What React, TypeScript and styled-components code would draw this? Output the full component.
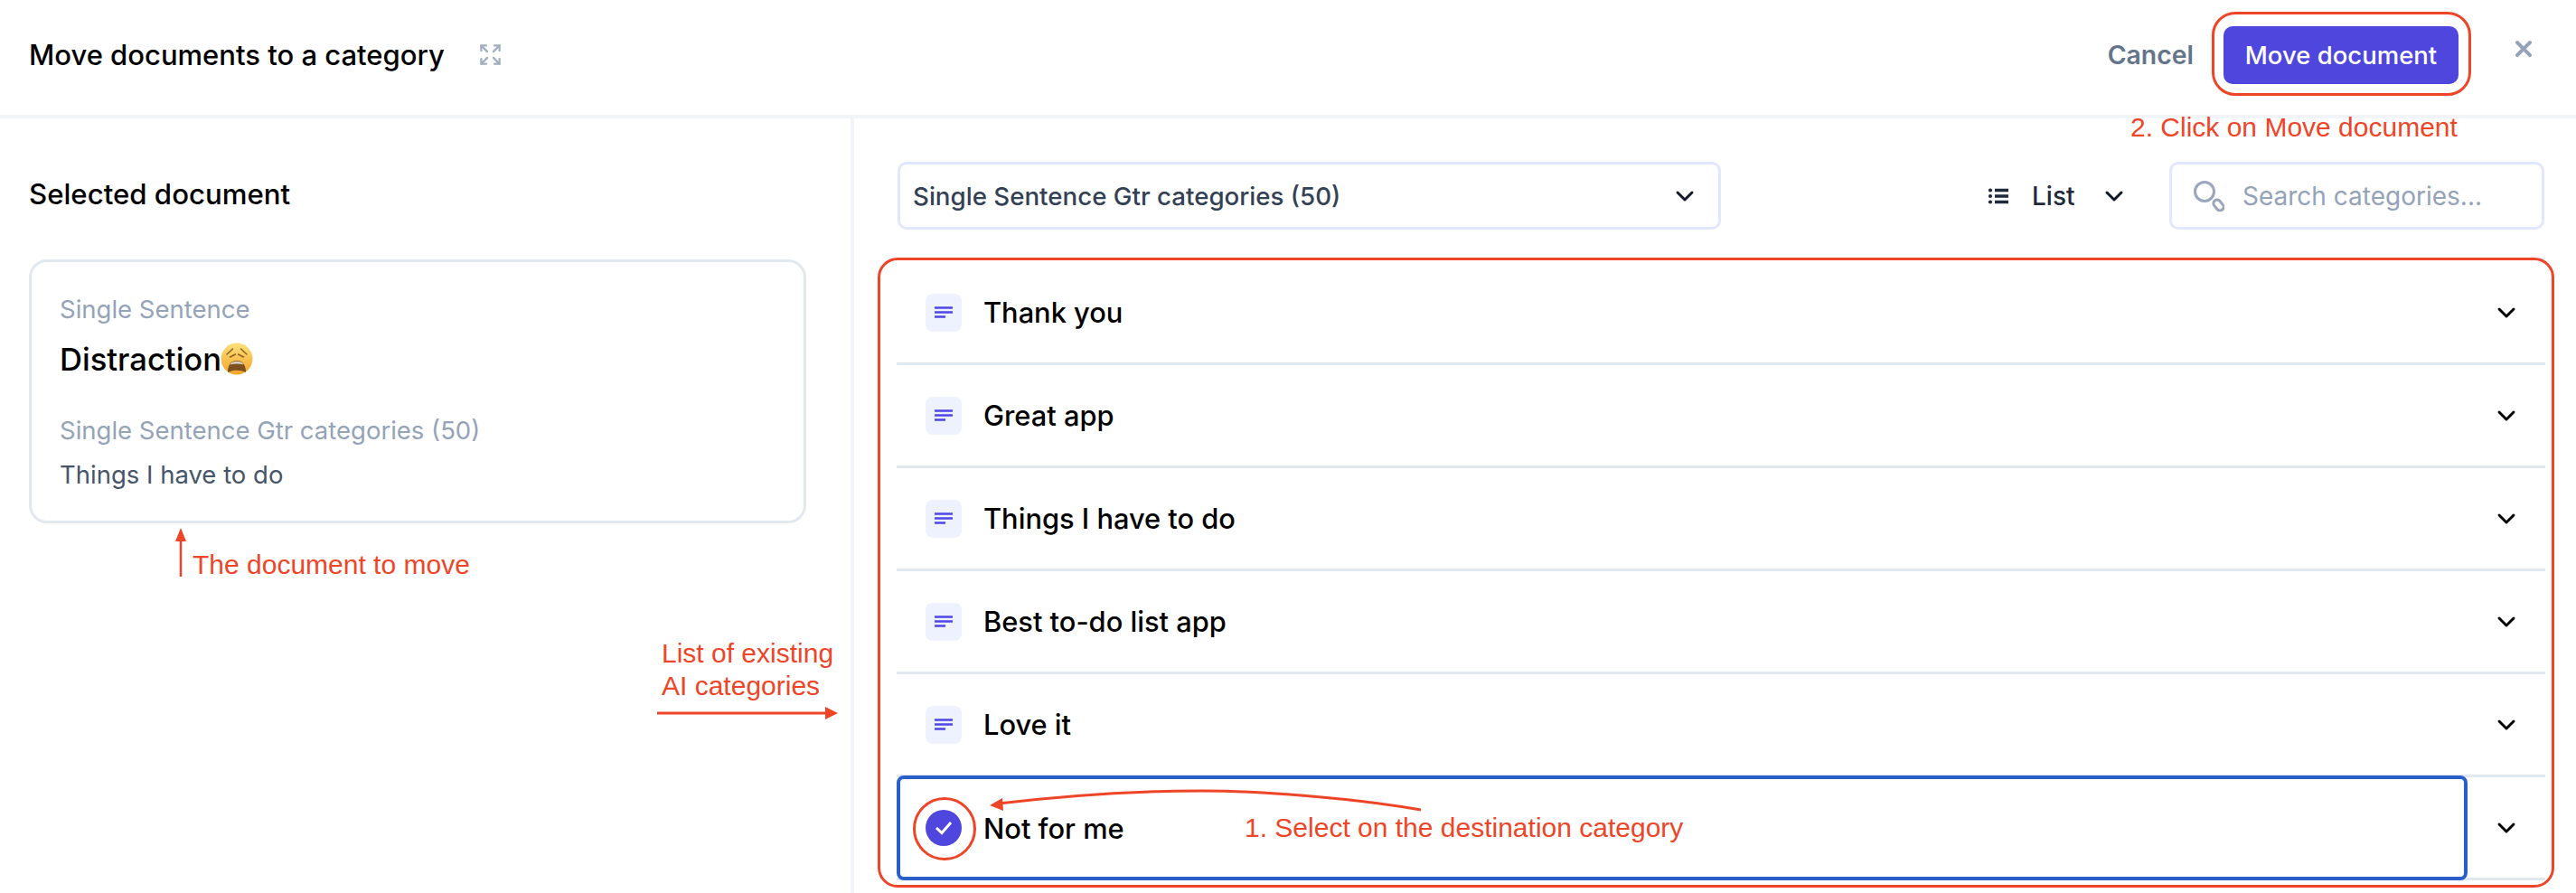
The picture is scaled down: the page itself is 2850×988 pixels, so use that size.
import React from "react";
import styled, { createGlobalStyle } from "styled-components";
import { Expand, X, ChevronDown } from "lucide-react";

const RED = "#ee4528";
const UI = `Inter, "Liberation Sans", sans-serif`;
const NOTE = `"Liberation Sans", Arial, sans-serif`;

const Global = createGlobalStyle`
  html, body { margin: 0; padding: 0; background: #fff; }
  * { box-sizing: border-box; }
  body { font-family: ${UI}; }
`;

const Page = styled.div`
  position: relative;
  width: 2850px;
  height: 988px;
  overflow: hidden;
  background: #fff;
  display: flex;
  flex-direction: column;
`;

const Header = styled.header`
  flex: none;
  height: 131px;
  border-bottom: 4px solid #f1f5f9;
  display: flex;
  align-items: center;
  padding: 0 44px 6px 32px;
`;

const Title = styled.h1`
  margin: 0;
  font-size: 31px;
  line-height: 40px;
  font-weight: 500;
  color: #000;
`;

const ExpandButton = styled.span`
  display: flex;
  margin-left: 37px;
  color: #a0aec0;
`;

const HeaderActions = styled.div`
  margin-left: auto;
  display: flex;
  align-items: center;
`;

const CancelText = styled.span`
  font-size: 28.4px;
  font-weight: 600;
  color: #64748b;
  margin-right: 33px;
`;

const PrimaryButton = styled.button`
  position: relative;
  width: 260px;
  height: 64px;
  border: 0;
  border-radius: 10px;
  background: #4f46dd;
  color: #fff;
  font-family: ${UI};
  font-size: 27.5px;
  font-weight: 500;
  padding: 0;
`;

const ButtonRing = styled.span`
  position: absolute;
  left: -13px;
  right: -14px;
  top: -16px;
  bottom: -13px;
  border: 3px solid ${RED};
  border-radius: 26px;
`;

const ClickNote = styled.span`
  position: absolute;
  left: -103px;
  top: 94px;
  font-family: ${NOTE};
  font-size: 30px;
  line-height: 36px;
  font-weight: 400;
  color: ${RED};
  white-space: nowrap;
`;

const CloseButton = styled.span`
  display: flex;
  margin-left: 58px;
  margin-top: -13px;
  color: #94a3b8;
`;

const Body = styled.main`
  flex: 1;
  display: flex;
  min-height: 0;
`;

const LeftPane = styled.section`
  flex: none;
  width: 945px;
  border-right: 4px solid #f1f5f9;
  padding: 64px 50px 0 32px;
  position: relative;
`;

const SectionTitle = styled.h2`
  margin: 0 0 52px;
  font-size: 31.2px;
  line-height: 40px;
  font-weight: 500;
  color: #000;
`;

const DocCard = styled.article`
  width: 860px;
  height: 292px;
  border: 3px solid #e2e8f0;
  border-radius: 20px;
  padding: 34px 31px 0;
`;

const Muted = styled.div`
  font-size: 27.5px;
  line-height: 36px;
  color: #94a3b8;
`;

const DocName = styled.div`
  display: flex;
  align-items: center;
  margin: 13px 0 37px;
  font-size: 34.6px;
  line-height: 48px;
  font-weight: 500;
  color: #000;
`;

const DocCategory = styled.div`
  margin-top: 13px;
  font-size: 27.5px;
  line-height: 36px;
  color: #475569;
`;

const RightPane = styled.section`
  flex: 1;
  min-width: 0;
  padding: 48px 34px 0 48px;
  position: relative;
`;

const Toolbar = styled.div`
  display: flex;
  align-items: center;
  height: 75px;
`;

const SelectBox = styled.div`
  width: 911px;
  height: 75px;
  border: 3px solid #e0e7ff;
  border-radius: 10px;
  display: flex;
  align-items: center;
  justify-content: space-between;
  padding: 0 21px 0 14px;
  font-size: 27.7px;
  font-weight: 500;
  color: #334155;
`;

const ViewSwitch = styled.div`
  display: flex;
  align-items: center;
  margin-left: 295px;
  width: 201px;
  color: #1e293b;
  font-size: 28px;
  font-weight: 500;
`;

const ViewLabel = styled.span`
  margin: 0 27px 0 25px;
`;

const SearchBox = styled.div`
  width: 415px;
  height: 75px;
  border: 3px solid #e0e7ff;
  border-radius: 10px;
  display: flex;
  align-items: center;
  padding-left: 24px;
  font-size: 28px;
  color: #94a3b8;
`;

const SearchLabel = styled.span`
  margin-left: 20px;
`;

const ListWrap = styled.div`
  position: relative;
  margin: 36px 0 0 -1px;
`;

const ListRing = styled.div`
  position: absolute;
  left: -21px;
  right: -10px;
  top: -5px;
  bottom: -8px;
  border: 3px solid ${RED};
  border-radius: 22px;
  pointer-events: none;
`;

const Row = styled.div`
  position: relative;
  height: 114px;
  display: flex;
  align-items: center;
  border-bottom: 3px solid #e2e8f0;
`;

const RowMain = styled.div<{ $selected?: boolean }>`
  flex: 1;
  display: flex;
  align-items: center;
  gap: 24px;
  align-self: stretch;
  font-size: 30.8px;
  font-weight: 500;
  color: #000;
  padding-left: ${(p) => (p.$selected ? "28px" : "32px")};
  margin: ${(p) => (p.$selected ? "-2px 0 -3px" : "0")};
  border: ${(p) => (p.$selected ? "4px solid #2a5fc9" : "0")};
  border-radius: ${(p) => (p.$selected ? "8px" : "0")};
  position: relative;
  background: #fff;
`;

const RowLabel = styled.span`
  margin-left: 0;
`;

const RowChevron = styled.span`
  flex: none;
  width: 86px;
  display: flex;
  justify-content: center;
  color: #000;
`;

const DocBadge = styled.span`
  flex: none;
  width: 40px;
  height: 42px;
  border-radius: 8px;
  background: #eef2ff;
  display: flex;
  align-items: center;
  justify-content: center;
`;

const CheckBadge = styled.span`
  position: relative;
  flex: none;
  width: 40px;
  height: 40px;
  border-radius: 50%;
  background: #4f46dd;
  display: flex;
  align-items: center;
  justify-content: center;
`;

const CheckRing = styled.span`
  position: absolute;
  left: -14px;
  right: -16px;
  top: -14px;
  bottom: -16px;
  border: 3px solid ${RED};
  border-radius: 50%;
`;

const SelectNote = styled.span`
  position: absolute;
  left: 381px;
  top: 50%;
  transform: translateY(-50%);
  font-family: ${NOTE};
  font-size: 30px;
  font-weight: 400;
  color: ${RED};
  white-space: nowrap;
`;

const DocNote = styled.span`
  position: absolute;
  left: 213px;
  top: 476px;
  font-family: ${NOTE};
  font-size: 30px;
  line-height: 36px;
  color: ${RED};
  white-space: nowrap;
`;

const ListNote = styled.span`
  position: absolute;
  left: 732px;
  top: 574px;
  font-family: ${NOTE};
  font-size: 30px;
  line-height: 36px;
  color: ${RED};
  white-space: nowrap;
`;

const DocArrow = styled.svg`
  position: absolute;
  left: 190px;
  top: 453px;
`;

const ListArrow = styled.svg`
  position: absolute;
  left: 725px;
  top: 649px;
`;

const CurvedArrow = styled.svg`
  position: absolute;
  left: 95px;
  top: 12px;
  overflow: visible;
`;

const EmojiSvg = styled.svg`
  flex: none;
  margin-left: -1px;
`;

const DocLines = () => (
  <svg width="20" height="14" viewBox="0 0 20 14" aria-hidden>
    <path d="M0 1.5h20M0 6.5h20M0 11.5h12" stroke="#4f46e5" strokeWidth="2.4" />
  </svg>
);

const SearchGlyph = () => (
  <svg width="34" height="34" viewBox="0 0 34 34" fill="none" stroke="#9aa6bd" strokeWidth="3" aria-hidden>
    <circle cx="12" cy="12" r="10.500" />
    <rect x="23.500" y="20.500" width="8" height="13" rx="4" transform="rotate(-40 27.500 27)" />
  </svg>
);

const ListGlyph = () => (
  <svg width="24" height="20" viewBox="0 0 24 20" aria-hidden>
    <path d="M8 3.500h15M8 10h15M8 16.500h15" stroke="#1e293b" strokeWidth="3.6" />
    <circle cx="3" cy="3.500" r="2.100" fill="#1e293b" />
    <circle cx="3" cy="10" r="2.100" fill="#1e293b" />
    <circle cx="3" cy="16.500" r="2.100" fill="#1e293b" />
  </svg>
);

const WearyEmoji = () => (
  <EmojiSvg width="36" height="36" viewBox="0 0 36 36" aria-hidden>
    <defs>
      <linearGradient id="wearyFace" x1="0" y1="0" x2="0" y2="1">
        <stop offset="0" stopColor="#fde07a" />
        <stop offset="1" stopColor="#f3a52a" />
      </linearGradient>
    </defs>
    <circle cx="18" cy="18" r="17.500" fill="url(#wearyFace)" />
    <path
      d="M7 13l6.500-6M10.500 16l6-3M29 13l-6.500-6M25.500 16l-6-3"
      stroke="#8a5f24"
      strokeWidth="1.400"
      fill="none"
      strokeLinecap="round"
    />
    <path d="M8 33C8 24 12 20 18 20S28 24 28 33C22 30 14 30 8 33z" fill="#7b4f1e" />
    <path d="M10.500 24.500C12 21.500 15 20.800 18 20.800S24 21.500 25.500 24.500C21 23 15 23 10.500 24.500z" fill="#d8cfc0" />
  </EmojiSvg>
);

const RowCaret = () => <ChevronDown size={32} strokeWidth={2.2} />;
const ToolbarCaret = () => <ChevronDown size={32} strokeWidth={2.2} color="#0f172a" />;

const rows = ["Thank you", "Great app", "Things I have to do", "Best to-do list app", "Love it"];

export default function App() {
  return (
    <Page>
      <Global />
      <Header>
        <Title>Move documents to a category</Title>
        <ExpandButton>
          <Expand size={27} strokeWidth={2} />
        </ExpandButton>
        <HeaderActions>
          <CancelText>Cancel</CancelText>
          <PrimaryButton>
            Move document
            <ButtonRing />
            <ClickNote>2. Click on Move document</ClickNote>
          </PrimaryButton>
          <CloseButton>
            <X size={28} strokeWidth={3.4} />
          </CloseButton>
        </HeaderActions>
      </Header>
      <Body>
        <LeftPane>
          <SectionTitle>Selected document</SectionTitle>
          <DocCard>
            <Muted>Single Sentence</Muted>
            <DocName>
              Distraction
              <WearyEmoji />
            </DocName>
            <Muted>Single Sentence Gtr categories (50)</Muted>
            <DocCategory>Things I have to do</DocCategory>
          </DocCard>
          <DocArrow width="20" height="54" viewBox="0 0 20 54" aria-hidden>
            <path d="M10 12V54" stroke={RED} strokeWidth="2.5" />
            <path d="M10 0l6 15H4z" fill={RED} />
          </DocArrow>
          <DocNote>The document to move</DocNote>
          <ListNote>
            List of existing
            <br />
            AI categories
          </ListNote>
          <ListArrow width="204" height="18" viewBox="0 0 204 18" aria-hidden>
            <path d="M2 9H190" stroke={RED} strokeWidth="3" />
            <path d="M202 9L188 2v14z" fill={RED} />
          </ListArrow>
        </LeftPane>
        <RightPane>
          <Toolbar>
            <SelectBox>
              Single Sentence Gtr categories (50)
              <ToolbarCaret />
            </SelectBox>
            <ViewSwitch>
              <ListGlyph />
              <ViewLabel>List</ViewLabel>
              <ToolbarCaret />
            </ViewSwitch>
            <SearchBox>
              <SearchGlyph />
              <SearchLabel>Search categories...</SearchLabel>
            </SearchBox>
          </Toolbar>
          <ListWrap>
            {rows.map((r) => (
              <Row key={r}>
                <RowMain>
                  <DocBadge>
                    <DocLines />
                  </DocBadge>
                  <RowLabel>{r}</RowLabel>
                </RowMain>
                <RowChevron>
                  <RowCaret />
                </RowChevron>
              </Row>
            ))}
            <Row>
              <RowMain $selected>
                <CheckBadge>
                  <svg width="22" height="16" viewBox="0 0 22 16" aria-hidden>
                    <path d="M3 8l6 5.500L19 2" stroke="#fff" strokeWidth="3" fill="none" />
                  </svg>
                  <CheckRing />
                </CheckBadge>
                <RowLabel>Not for me</RowLabel>
                <SelectNote>1. Select on the destination category</SelectNote>
                <CurvedArrow width="500" height="40" viewBox="0 0 500 40" aria-hidden>
                  <path d="M14 15C100 5 180 1 239 1S400 8 481 22" stroke={RED} strokeWidth="3" fill="none" />
                  <path d="M4 17L18 9L19 23z" fill={RED} />
                </CurvedArrow>
              </RowMain>
              <RowChevron>
                <RowCaret />
              </RowChevron>
            </Row>
            <ListRing />
          </ListWrap>
        </RightPane>
      </Body>
    </Page>
  );
}
